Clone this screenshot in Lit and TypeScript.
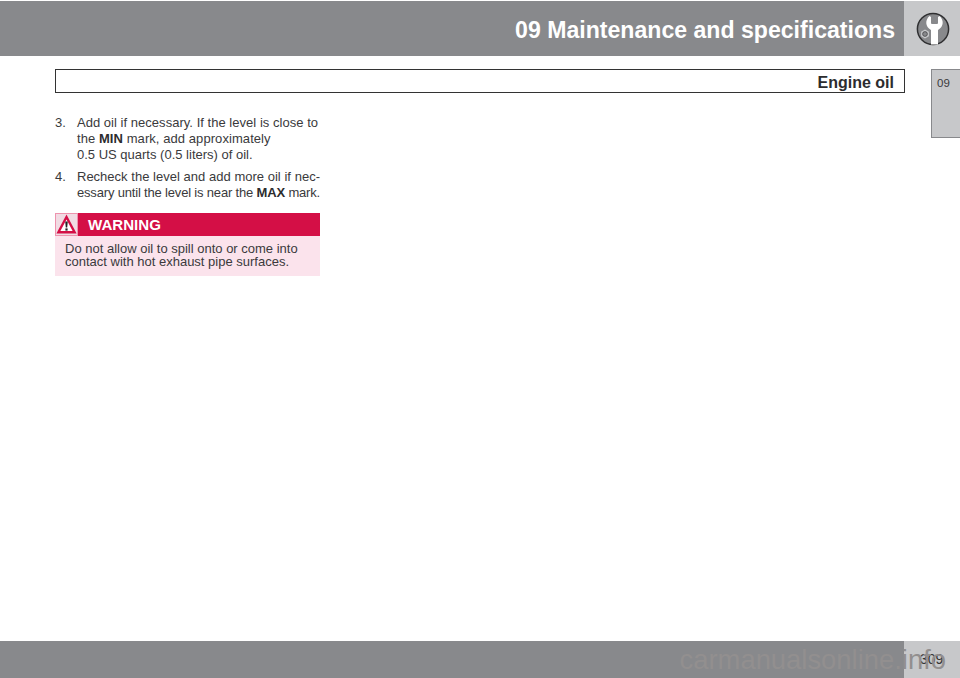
import { LitElement, html, css } from "lit";
import { customElement } from "lit/decorators.js";

@customElement("app-root")
export class AppRoot extends LitElement {
  static styles = css`
    :host {
      display: block;
      width: 960px;
      height: 678px;
      position: relative;
      overflow: hidden;
      background: #fff;
      font-family: "Liberation Sans", Arial, sans-serif;
      color: #3a3a3c;
    }
    .page {
      display: flex;
      flex-direction: column;
      height: 678px;
    }
    .top {
      display: flex;
      height: 55px;
      margin-top: 1px;
      flex: none;
    }
    .top-title {
      width: 904px;
      background: #88898c;
      color: #fff;
      font-weight: 700;
      font-size: 23.1px;
      display: flex;
      align-items: center;
      justify-content: flex-end;
      padding: 3px 9px 0 0;
      box-sizing: border-box;
    }
    .top-icon {
      width: 56px;
      background: #c7c8ca;
      display: flex;
      align-items: center;
      justify-content: center;
      padding-left: 2px;
      box-sizing: border-box;
    }
    .middle {
      flex: 1;
      display: flex;
      justify-content: space-between;
      min-height: 0;
    }
    .main {
      width: 905px;
      flex: none;
      padding: 13px 0 0 55px;
      box-sizing: border-box;
    }
    .section-bar {
      height: 24px;
      border: 1.5px solid #333;
      box-sizing: border-box;
      display: flex;
      align-items: center;
      justify-content: flex-end;
      padding: 3px 10px 0 0;
      font-weight: 700;
      font-size: 16px;
      color: #2c2c2e;
    }
    .column {
      width: 265px;
      margin-top: 22px;
      font-size: 13px;
      line-height: 16px;
    }
    .step {
      display: grid;
      grid-template-columns: 22px minmax(0, 1fr);
      margin-bottom: 6px;
    }
    .step span.l {
      display: block;
      white-space: nowrap;
    }
    .step span.first {
      letter-spacing: 0.03px;
    }
    .step span.wide {
      letter-spacing: 0.07px;
    }
    .step span.j {
      display: block;
      white-space: nowrap;
      text-align: justify;
      text-align-last: justify;
    }
    .step span.tight {
      letter-spacing: -0.18px;
    }
    b { font-weight: 700; color: #2c2c2e; }
    .warning {
      margin-top: 12px;
      background: #fbe3ec;
      height: 63px;
    }
    .w-head {
      height: 23px;
      background: #d40f46;
      display: flex;
      align-items: center;
      color: #fff;
      font-weight: 700;
      font-size: 15.1px;
    }
    .w-icon {
      width: 23px;
      height: 23px;
      flex: none;
      background: #f1dbe3;
      border: 1px solid #ee93ae;
      box-sizing: border-box;
      display: flex;
      align-items: center;
      justify-content: center;
    }
    .w-label { margin: 1px 0 0 10px; }
    .w-body {
      padding: 6px 10px 0 10px;
      font-size: 13px;
      line-height: 13px;
    }
    .w-body div { white-space: nowrap; }
    .tab {
      width: 29px;
      height: 69px;
      background: #c7c8ca;
      border: 1px solid #88898c;
      border-right: none;
      box-sizing: border-box;
      font-size: 11.5px;
      line-height: 14px;
      padding: 6px 0 0 5px;
      color: #3a3a3c;
    }
    .side { padding-top: 13px; }
    .bottom {
      display: flex;
      height: 37px;
      flex: none;
    }
    .bottom-left { width: 904px; background: #88898c; }
    .bottom-right {
      width: 56px;
      background: #c7c8ca;
      font-size: 14px;
      color: #333;
      padding: 10px 0 0 16px;
      box-sizing: border-box;
    }
    .mark {
      position: absolute;
      right: 14px;
      bottom: 0;
      font-size: 27.4px;
      line-height: 37px;
      color: #928f8f;
      white-space: nowrap;
    }
  `;

  render() {
    return html`
      <div class="page">
        <div class="top">
          <div class="top-title">09 Maintenance and specifications</div>
          <div class="top-icon">
            <svg width="34" height="34" viewBox="0 0 34 34">
              <circle cx="17" cy="17" r="15.6" fill="#88898c" stroke="#2f2f31" stroke-width="1.5"></circle>
              <path d="M13.5 4 C9 8 9 14.5 15 18 V32.5 H22 V18 C28 14.5 28 8 23.5 4 L22 5 V11 Q22 12 21 12 H16 Q15 12 15 11 V5 Z" fill="#fff"></path>
              <polygon points="9,17.6 12.9,19.8 12.9,24.2 9,26.4 5.1,24.2 5.1,19.8" fill="#c9cacc"></polygon>
              <circle cx="9" cy="22" r="2.4" fill="#88898c" stroke="#3a3a3c" stroke-width="0.7"></circle>
            </svg>
          </div>
        </div>
        <div class="middle">
          <div class="main">
            <div class="section-bar">Engine oil</div>
            <div class="column">
              <div class="step">
                <span>3.</span>
                <div>
                  <span class="l first">Add oil if necessary. If the level is close to</span>
                  <span class="l wide">the <b>MIN</b> mark, add approximately</span>
                  <span class="l">0.5 US quarts (0.5 liters) of oil.</span>
                </div>
              </div>
              <div class="step">
                <span>4.</span>
                <div>
                  <span class="j">Recheck the level and add more oil if nec-</span>
                  <span class="j tight">essary until the level is near the <b>MAX</b> mark.</span>
                </div>
              </div>
              <div class="warning">
                <div class="w-head">
                  <div class="w-icon">
                    <svg width="21" height="21" viewBox="0 0 21 21">
                      <path d="M10.5 3 L18.6 18.2 H2.4 Z" fill="#fff" stroke="#d40f46" stroke-width="2.4"></path>
                      <path d="M9.2 7.5 H11.8 L11.2 13.5 H9.8 Z" fill="#222"></path>
                      <rect x="9.4" y="14.4" width="2.2" height="2.2" fill="#222"></rect>
                    </svg>
                  </div>
                  <span class="w-label">WARNING</span>
                </div>
                <div class="w-body">
                  <div>Do not allow oil to spill onto or come into</div>
                  <div>contact with hot exhaust pipe surfaces.</div>
                </div>
              </div>
            </div>
          </div>
          <div class="side"><div class="tab">09</div></div>
        </div>
        <div class="bottom">
          <div class="bottom-left"></div>
          <div class="bottom-right">309</div>
        </div>
      </div>
      <div class="mark">carmanualsonline.info</div>
    `;
  }
}
